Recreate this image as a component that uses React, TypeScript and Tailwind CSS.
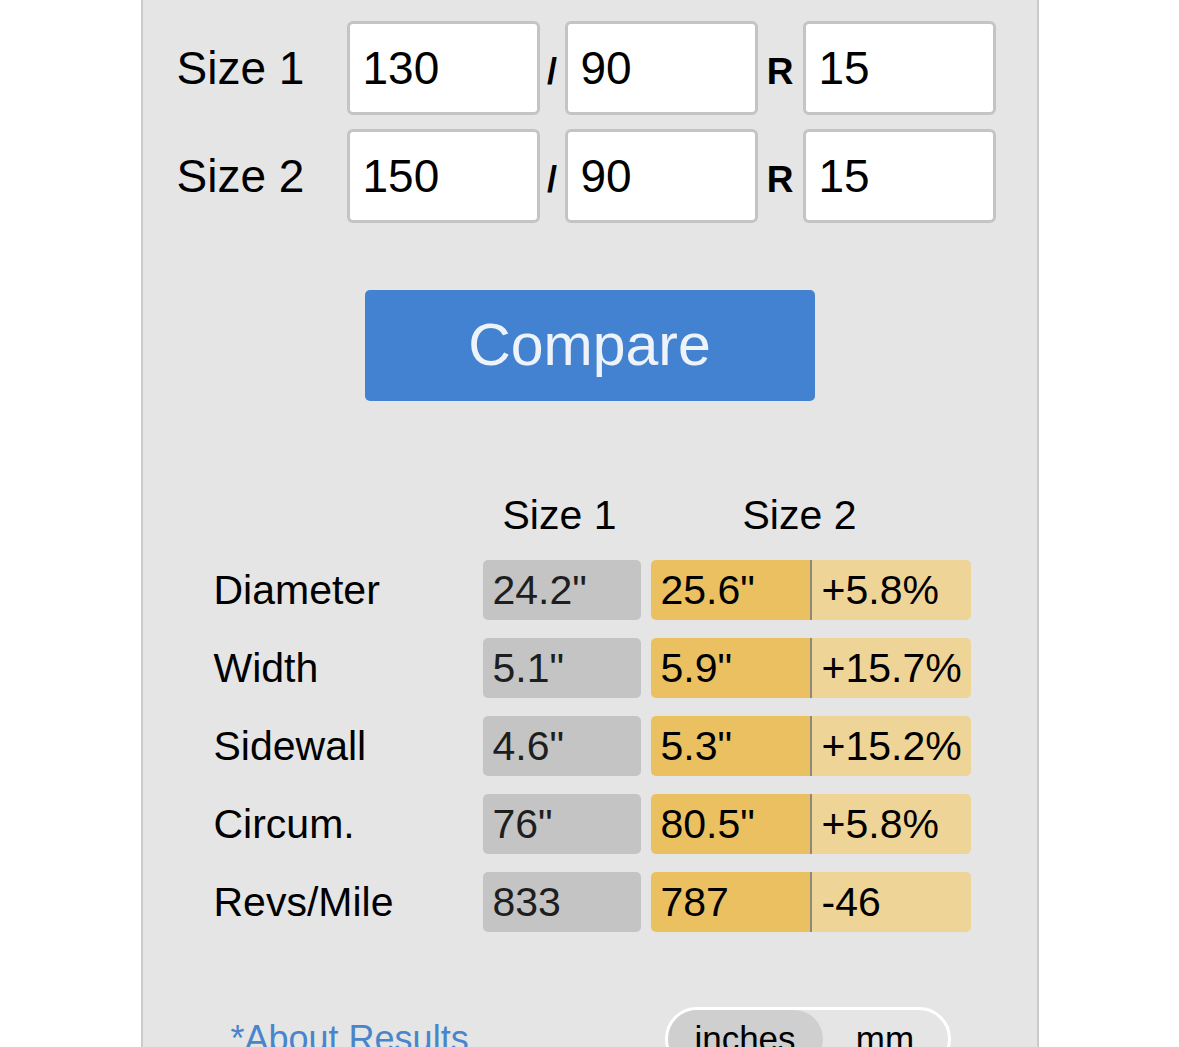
import React from "react";

type row = {
  label: string;
  size1: string;
  size2: string;
  diff: string;
};

const rows: row[] = [
  { label: "Diameter", size1: '24.2"', size2: '25.6"', diff: "+5.8%" },
  { label: "Width", size1: '5.1"', size2: '5.9"', diff: "+15.7%" },
  { label: "Sidewall", size1: '4.6"', size2: '5.3"', diff: "+15.2%" },
  { label: "Circum.", size1: '76"', size2: '80.5"', diff: "+5.8%" },
  { label: "Revs/Mile", size1: "833", size2: "787", diff: "-46" },
];

function SizeInput({ value }: { value: string }) {
  return (
    <input
      defaultValue={value}
      className="w-[193px] h-[94px] border-[3px] border-[#c4c4c4] rounded-[6px] bg-white pl-[13px] text-[46px] text-black outline-none"
    />
  );
}

function SizeRow({ label, width, ratio, rim }: { label: string; width: string; ratio: string; rim: string }) {
  return (
    <div className="flex items-baseline">
      <span className="w-[170px] text-[46px] text-black">{label}</span>
      <SizeInput value={width} />
      <span className="w-[25px] text-center text-[36px] font-bold text-black">/</span>
      <SizeInput value={ratio} />
      <span className="w-[45px] text-center text-[37px] font-bold text-black">R</span>
      <SizeInput value={rim} />
    </div>
  );
}

export default function App() {
  return (
    <div className="min-h-screen bg-white" style={{ fontFamily: '"Liberation Sans", Arial, sans-serif' }}>
      <div className="mx-auto w-[898px] min-h-[1047px] bg-[#e5e5e5] border-x-2 border-[#cbcbcb] pt-[21px] pb-10">
        <div className="pl-[34px] flex flex-col gap-[14px]">
          <SizeRow label="Size 1" width="130" ratio="90" rim="15" />
          <SizeRow label="Size 2" width="150" ratio="90" rim="15" />
        </div>

        <button className="mx-auto mt-[67px] flex items-center justify-center w-[450px] h-[111px] rounded-[5px] bg-[#4382d0] text-[59px] text-[#eef3fa]">
          Compare
        </button>

        <div className="pl-[71px] mt-[90px]">
          <div className="flex h-[50px] items-center text-[41px] text-black">
            <div className="w-[269px]" />
            <div className="w-[158px] pr-[4px] text-center">Size 1</div>
            <div className="ml-[10px] w-[298px] text-center">Size 2</div>
          </div>

          <div className="mt-[19px] flex flex-col gap-[18px]">
            {rows.map((r) => (
              <div key={r.label} className="flex items-center h-[60px] text-[41px]">
                <div className="w-[269px] pt-[2px] text-black">{r.label}</div>
                <div className="w-[158px] h-full rounded-[5px] bg-[#c4c4c4] pl-[10px] pt-[2px] flex items-center text-[#1e1e1e]">
                  {r.size1}
                </div>
                <div className="ml-[10px] flex h-full w-[320px] rounded-[5px] overflow-hidden text-black">
                  <div className="w-[159px] bg-[#ebc060] pl-[10px] pt-[2px] flex items-center">{r.size2}</div>
                  <div className="w-[2px] bg-[#8e887c]" />
                  <div className="w-[159px] bg-[#efd497] pl-[10px] pt-[2px] flex items-center">{r.diff}</div>
                </div>
              </div>
            ))}
          </div>
        </div>

        <div className="mt-[75px] px-[86px] flex items-center justify-between">
          <a className="text-[36px] text-[#4a85cc] pl-[2px]">*About Results</a>
          <div className="flex w-[286px] h-[64px] rounded-full border-[3px] border-white text-[35px] text-black">
            <div className="w-[155px] rounded-full bg-[#cfcfcf] flex items-center justify-center">inches</div>
            <div className="flex-1 flex items-center justify-center">mm</div>
          </div>
        </div>
      </div>
    </div>
  );
}
